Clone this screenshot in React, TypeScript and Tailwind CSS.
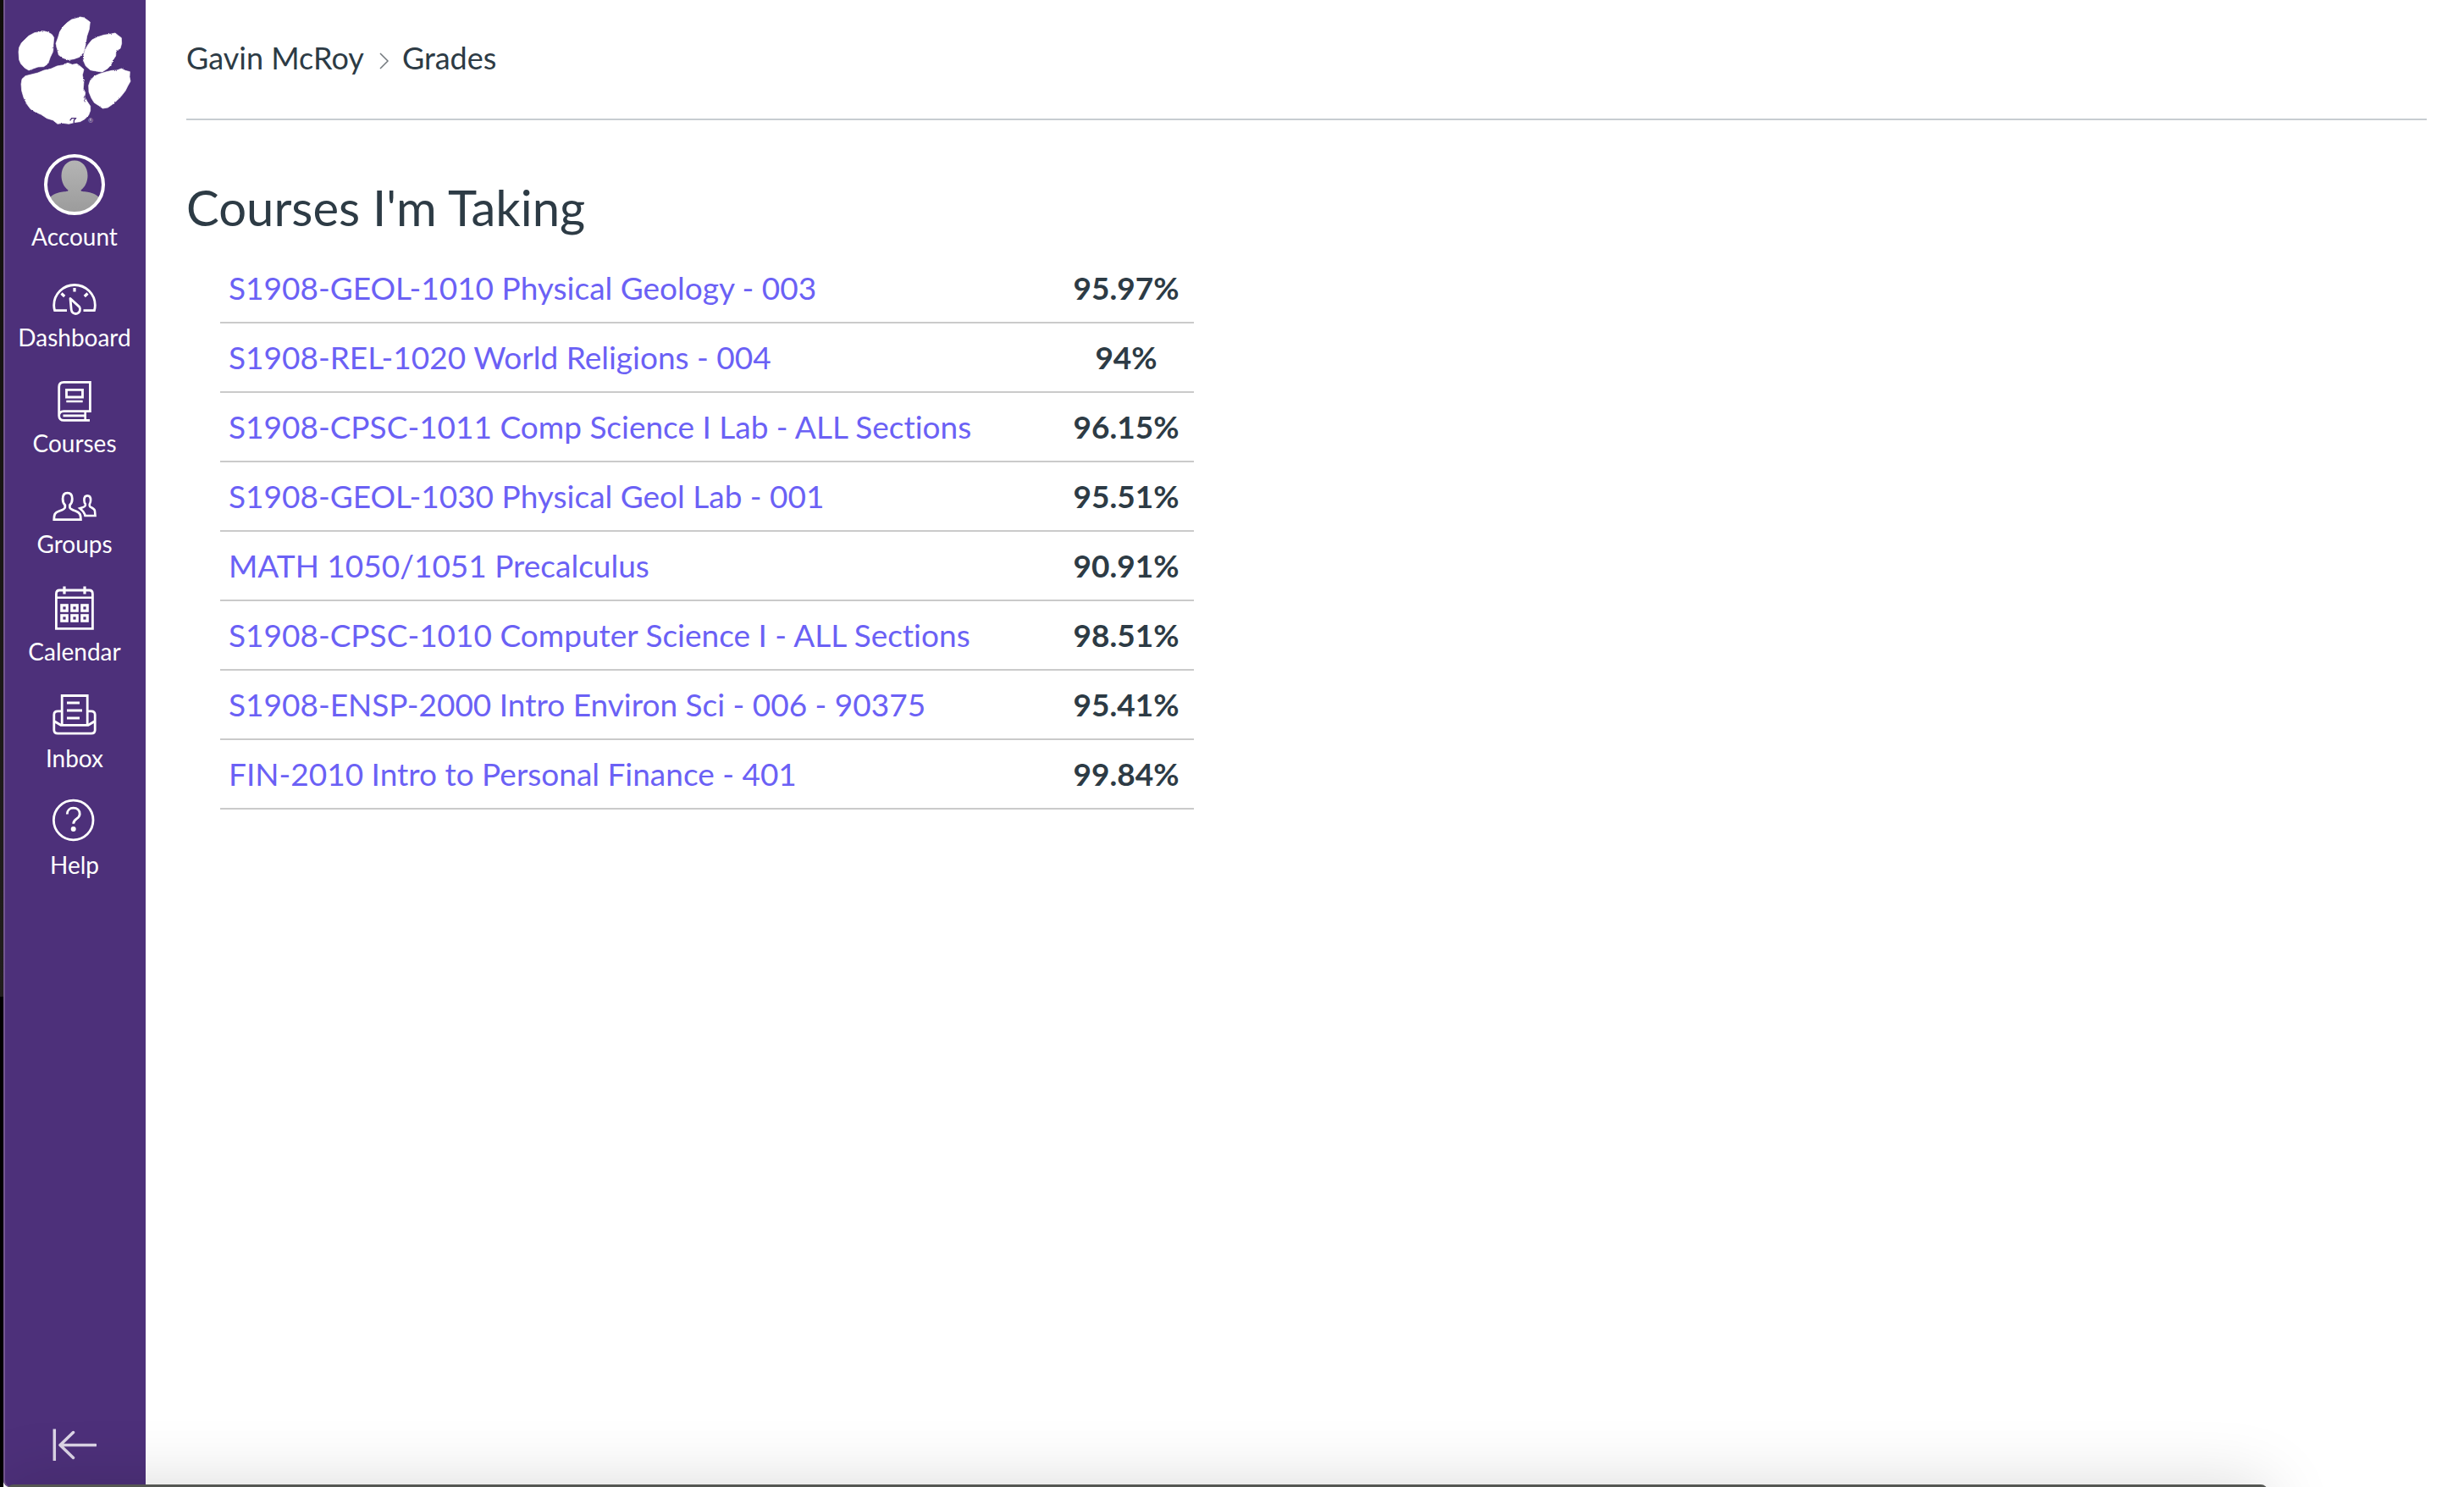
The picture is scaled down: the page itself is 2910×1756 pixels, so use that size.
import type { ReactNode } from "react";

const courses = [
  { name: "S1908-GEOL-1010 Physical Geology - 003", grade: "95.97%" },
  { name: "S1908-REL-1020 World Religions - 004", grade: "94%" },
  { name: "S1908-CPSC-1011 Comp Science I Lab - ALL Sections", grade: "96.15%" },
  { name: "S1908-GEOL-1030 Physical Geol Lab - 001", grade: "95.51%" },
  { name: "MATH 1050/1051 Precalculus", grade: "90.91%" },
  { name: "S1908-CPSC-1010 Computer Science I - ALL Sections", grade: "98.51%" },
  { name: "S1908-ENSP-2000 Intro Environ Sci - 006 - 90375", grade: "95.41%" },
  { name: "FIN-2010 Intro to Personal Finance - 401", grade: "99.84%" },
];

function Icon({ height, children }: { height: number; children: ReactNode }) {
  return (
    <svg
      width="52"
      height={height}
      viewBox={`0 0 52 ${height}`}
      fill="none"
      stroke="currentColor"
      strokeWidth="2.8"
      aria-hidden="true"
      className="block overflow-visible"
    >
      {children}
    </svg>
  );
}

function PawLogo() {
  return (
    <svg viewBox="12 0 504 510" className="block w-full" fill="#fff" role="img" aria-label="Clemson University">
      <defs>
        <filter id="rough" x="-5%" y="-5%" width="110%" height="110%">
          <feTurbulence type="fractalNoise" baseFrequency="0.35" numOctaves="2" seed="4" result="noise" />
          <feDisplacementMap in="SourceGraphic" in2="noise" scale="6" xChannelSelector="R" yChannelSelector="G" />
        </filter>
      </defs>
      <g filter="url(#rough)" stroke="#fff" strokeWidth="2">
        <path d="M66 184 L68 168 L76 152 L88 140 L102 127 L122 116 L140 113 L155 110 L170 114 L184 122 L191 133 L189 158 L188 182 L178 203 L170 226 L155 236 L135 237 L118 243 L102 249 L88 241 L74 226 L68 212 Z" />
        <path d="M198 154 L206 132 L212 112 L224 94 L238 80 L254 69 L270 65 L284 60 L298 63 L308 70 L319 78 L316 104 L308 128 L303 158 L297 184 L282 202 L262 209 L242 212 L222 205 L208 195 L203 175 Z" />
        <path d="M295 214 L296 196 L302 176 L312 158 L326 141 L346 131 L368 124 L390 121 L408 117 L418 125 L430 134 L431 154 L426 172 L411 180 L410 198 L401 212 L393 230 L381 243 L362 255 L340 252 L320 248 L304 234 Z" />
        <path d="M314 303 L320 285 L334 270 L352 262 L374 255 L396 250 L414 249 L430 243 L444 250 L460 254 L459 272 L462 288 L453 304 L444 322 L430 340 L414 356 L398 370 L382 381 L364 384 L350 374 L334 364 L324 348 L315 326 Z" />
        <path d="M75 298 L78 280 L90 269 L110 264 L134 258 L156 249 L180 244 L202 234 L224 230 L240 223 L256 229 L272 226 L286 236 L297 246 L292 266 L297 288 L295 314 L302 328 L300 342 L308 358 L320 376 L320 392 L314 408 L300 422 L284 431 L262 434 L244 439 L222 436 L204 439 L188 426 L166 419 L146 406 L124 396 L108 386 L96 370 L84 346 L77 322 Z" />
      </g>
      <g fill="none" stroke="#4d307a" strokeWidth="4">
        <path d="M248 427 l6 -8 h14 l-6 8 v9" />
        <path d="M303 340 l-6 6 l7 4 l-7 6 l6 5" strokeWidth="2.5" />
      </g>
      <text x="312" y="435" fontSize="22" fontFamily="Lato, sans-serif" fill="#cfc6dc">®</text>
    </svg>
  );
}

const navItems: { label: string; icon: ReactNode }[] = [
  {
    label: "Account",
    icon: (
      <svg width="72" height="72" viewBox="0 0 72 72" aria-hidden="true" className="block">
        <defs>
          <clipPath id="avatar"><circle cx="36" cy="36" r="33" /></clipPath>
          <linearGradient id="grey" x1="0" y1="8" x2="0" y2="70" gradientUnits="userSpaceOnUse">
            <stop stopColor="#b4b4b4" />
            <stop offset="1" stopColor="#9b9b9b" />
          </linearGradient>
        </defs>
        <g clipPath="url(#avatar)" fill="url(#grey)">
          <path d="M36 7.5c9 0 15.500 7.500 15.500 18 0 7-3 13.500-8 17 0 2 3 1.500 8 2.200 7 1.300 12 3.800 16 9.300v18h-63v-18c4-5.500 9-8 16-9.300 5-.7 8-.2 8-2.200-5-3.500-8-10-8-17 0-10.500 6.500-18 15.500-18z" />
        </g>
        <circle cx="36" cy="36" r="34" fill="none" stroke="#fff" strokeWidth="4" />
      </svg>
    ),
  },
  {
    label: "Dashboard",
    icon: (
      <Icon height={45}>
        <path d="M17 38.600H2.600C2 36.500 1.700 34.500 1.700 32.500a24.300 24 0 0 1 48.600 0c0 2-.3 4-.9 6.100H36.500" />
        <path d="M26 12v4.500M10.500 18.500l3.700 3.500M41.500 18.500l-3.700 3.500" strokeWidth="3.200" />
        <path d="M21 24.500l1.200 13.200a5.200 5.200 0 1 0 9.500-3.300z" strokeLinejoin="round" />
      </Icon>
    ),
  },
  {
    label: "Courses",
    icon: (
      <Icon height={51}>
        <path d="M7.700 44V10c0-3.500 2-5.600 5.600-5.600H44.400V38.600H13.300c-3.500 0-5.600 2.200-5.600 5.400s2.200 5.400 5.600 5.400H44" />
        <path d="M38.700 38.600v10.800M12.500 43.900H38.700M16.300 27H35.700" strokeWidth="2.600" />
        <path d="M16.500 13.400h19v8.600h-19z" />
      </Icon>
    ),
  },
  {
    label: "Groups",
    icon: (
      <Icon height={45}>
        <path d="M1.800 41.600C1.800 35.500 2.500 33.500 8 31.500c4.500-1.500 6.800-2.500 6.800-4.500v-2.500c-2-2-2.700-4.500-2.700-7.500 0-4.500 2-6.900 5.500-6.900s5.700 2.400 5.700 6.900c0 3-.8 5.500-2.900 7.500V27c0 2 2.500 3 7 4.500 5 2 6 4 6 10.100z" />
        <path d="M32.300 28.300c3.700-1 6.500-2 6.500-3.500v-1.500c-1.200-1.600-1.400-3.200-1.400-4.800 0-3.300 1.500-5.100 3.800-5.100s3.900 1.800 3.900 5.100c0 1.800-.4 3.300-1.300 4.800v2c.3 2.300 6.200 2.400 6.200 6.200l.5 5.500h-12c-.6-4-2.700-5.700-6.200-8.700z" strokeWidth="2.600" />
      </Icon>
    ),
  },
  {
    label: "Calendar",
    icon: (
      <Icon height={53}>
        <path d="M4.400 51.300V10.500c0-3 1.400-4.500 4-4.500h35c2.600 0 4 1.500 4 4.500v40.800z" />
        <path d="M4.400 14.700h43" strokeWidth="2.500" />
        <path d="M14 1.500v9M38 1.500v9" strokeWidth="3.200" />
        {[14, 26, 38].map((x) =>
          [27, 39].map((y) => <rect key={`${x}-${y}`} x={x - 3.2} y={y - 3.2} width="6.400" height="6.400" strokeWidth="3.200" />),
        )}
      </Icon>
    ),
  },
  {
    label: "Inbox",
    icon: (
      <Icon height={52}>
        <path d="M11.200 38V3.500h30V38" />
        <path d="M17 12h15M17 21h18M17 30h15" />
        <path d="M11 21.800H6.300c-3 0-4.500 1.500-4.500 4.200v18c0 2.800 1.500 4.200 4.500 4.200h39.400c3 0 4.500-1.400 4.500-4.200V26c0-2.700-1.500-4.200-4.500-4.200H41.500M1.800 33.500l8 4.800h32.400l8-4.800" />
      </Icon>
    ),
  },
  {
    label: "Help",
    icon: (
      <Icon height={52}>
        <circle cx="24.700" cy="24.500" r="23.300" />
        <path d="M17.300 17.500c0-4.500 3-7.300 7.400-7.300s7.500 2.800 7.500 7c0 6-7.500 5.300-7.500 11.500" />
        <circle cx="24.700" cy="35" r="3" fill="currentColor" stroke="none" />
      </Icon>
    ),
  },
];

export default function App() {
  return (
    <div className="relative flex min-h-screen overflow-hidden bg-white font-['Lato',sans-serif] text-[#2d3b45] [font-variant-ligatures:no-common-ligatures]">
      <div className="w-1 shrink-0 bg-linear-to-b from-[#100e0b] via-[#211e1d] via-67% to-black to-67%" />
      <nav
        aria-label="Global navigation"
        className="flex w-[168px] shrink-0 flex-col items-center rounded-bl-lg bg-[#4d307a] pb-7 text-white shadow-[inset_2px_0_0_#73578f]"
      >
        <a href="#home" className="w-full">
          <PawLogo />
        </a>
        <ul className="flex flex-col items-center gap-8 pt-3">
          {navItems.map((item) => (
            <li key={item.label}>
              <a href={`#${item.label.toLowerCase()}`} className="flex flex-col items-center gap-2 text-[28px] leading-[34px]">
                {item.icon}
                {item.label}
              </a>
            </li>
          ))}
        </ul>
        <button type="button" aria-label="Minimize global navigation" className="mt-auto text-[#dcd5e6]">
          <svg width="52" height="44" viewBox="0 0 52 44" fill="none" stroke="currentColor" strokeWidth="3.500" className="block">
            <path d="M2.300 3.500v37.500" />
            <path d="M51 22.500H10M24.500 7.500L9 22.500l15.500 15" strokeLinecap="round" strokeLinejoin="round" />
          </svg>
        </button>
      </nav>

      <main className="min-w-0 flex-1 pr-11 pl-12">
        <nav aria-label="Breadcrumb" className="flex h-[142px] border-b-2 border-[#c7cdd1] pt-[46px]">
          <ol className="flex h-11 items-center text-[36px] leading-[44px]">
            <li><a href="#profile">Gavin McRoy</a></li>
            <li aria-hidden="true" className="pt-2 pr-[15px] pl-[18px]">
              <svg width="12" height="20" viewBox="0 0 12 20" fill="none" stroke="#73797e" strokeWidth="1.500" className="block">
                <path d="M1 1l9 9-9 9" />
              </svg>
            </li>
            <li aria-current="page">Grades</li>
          </ol>
        </nav>

        <h1 className="pt-17 pb-[19px] text-[58px] leading-[70px]">Courses I'm Taking</h1>
        <table className="ml-10 w-full max-w-[1150px] border-collapse text-[37px] leading-[46px]">
          <tbody>
            {courses.map((course) => (
              <tr key={course.name} className="h-[82px] border-b-2 border-[#cacaca]">
                <td className="pl-[10px]">
                  <a href="#course" className="text-[#6b61f5]">{course.name}</a>
                </td>
                <td className="w-[160px] text-center font-bold">{course.grade}</td>
              </tr>
            ))}
          </tbody>
        </table>
      </main>

      <div className="pointer-events-none absolute right-[232px] -bottom-[200px] left-2 h-[203px] rounded-lg bg-[#555753] shadow-[0_0_80px_rgba(0,0,0,0.15)]" />
    </div>
  );
}
